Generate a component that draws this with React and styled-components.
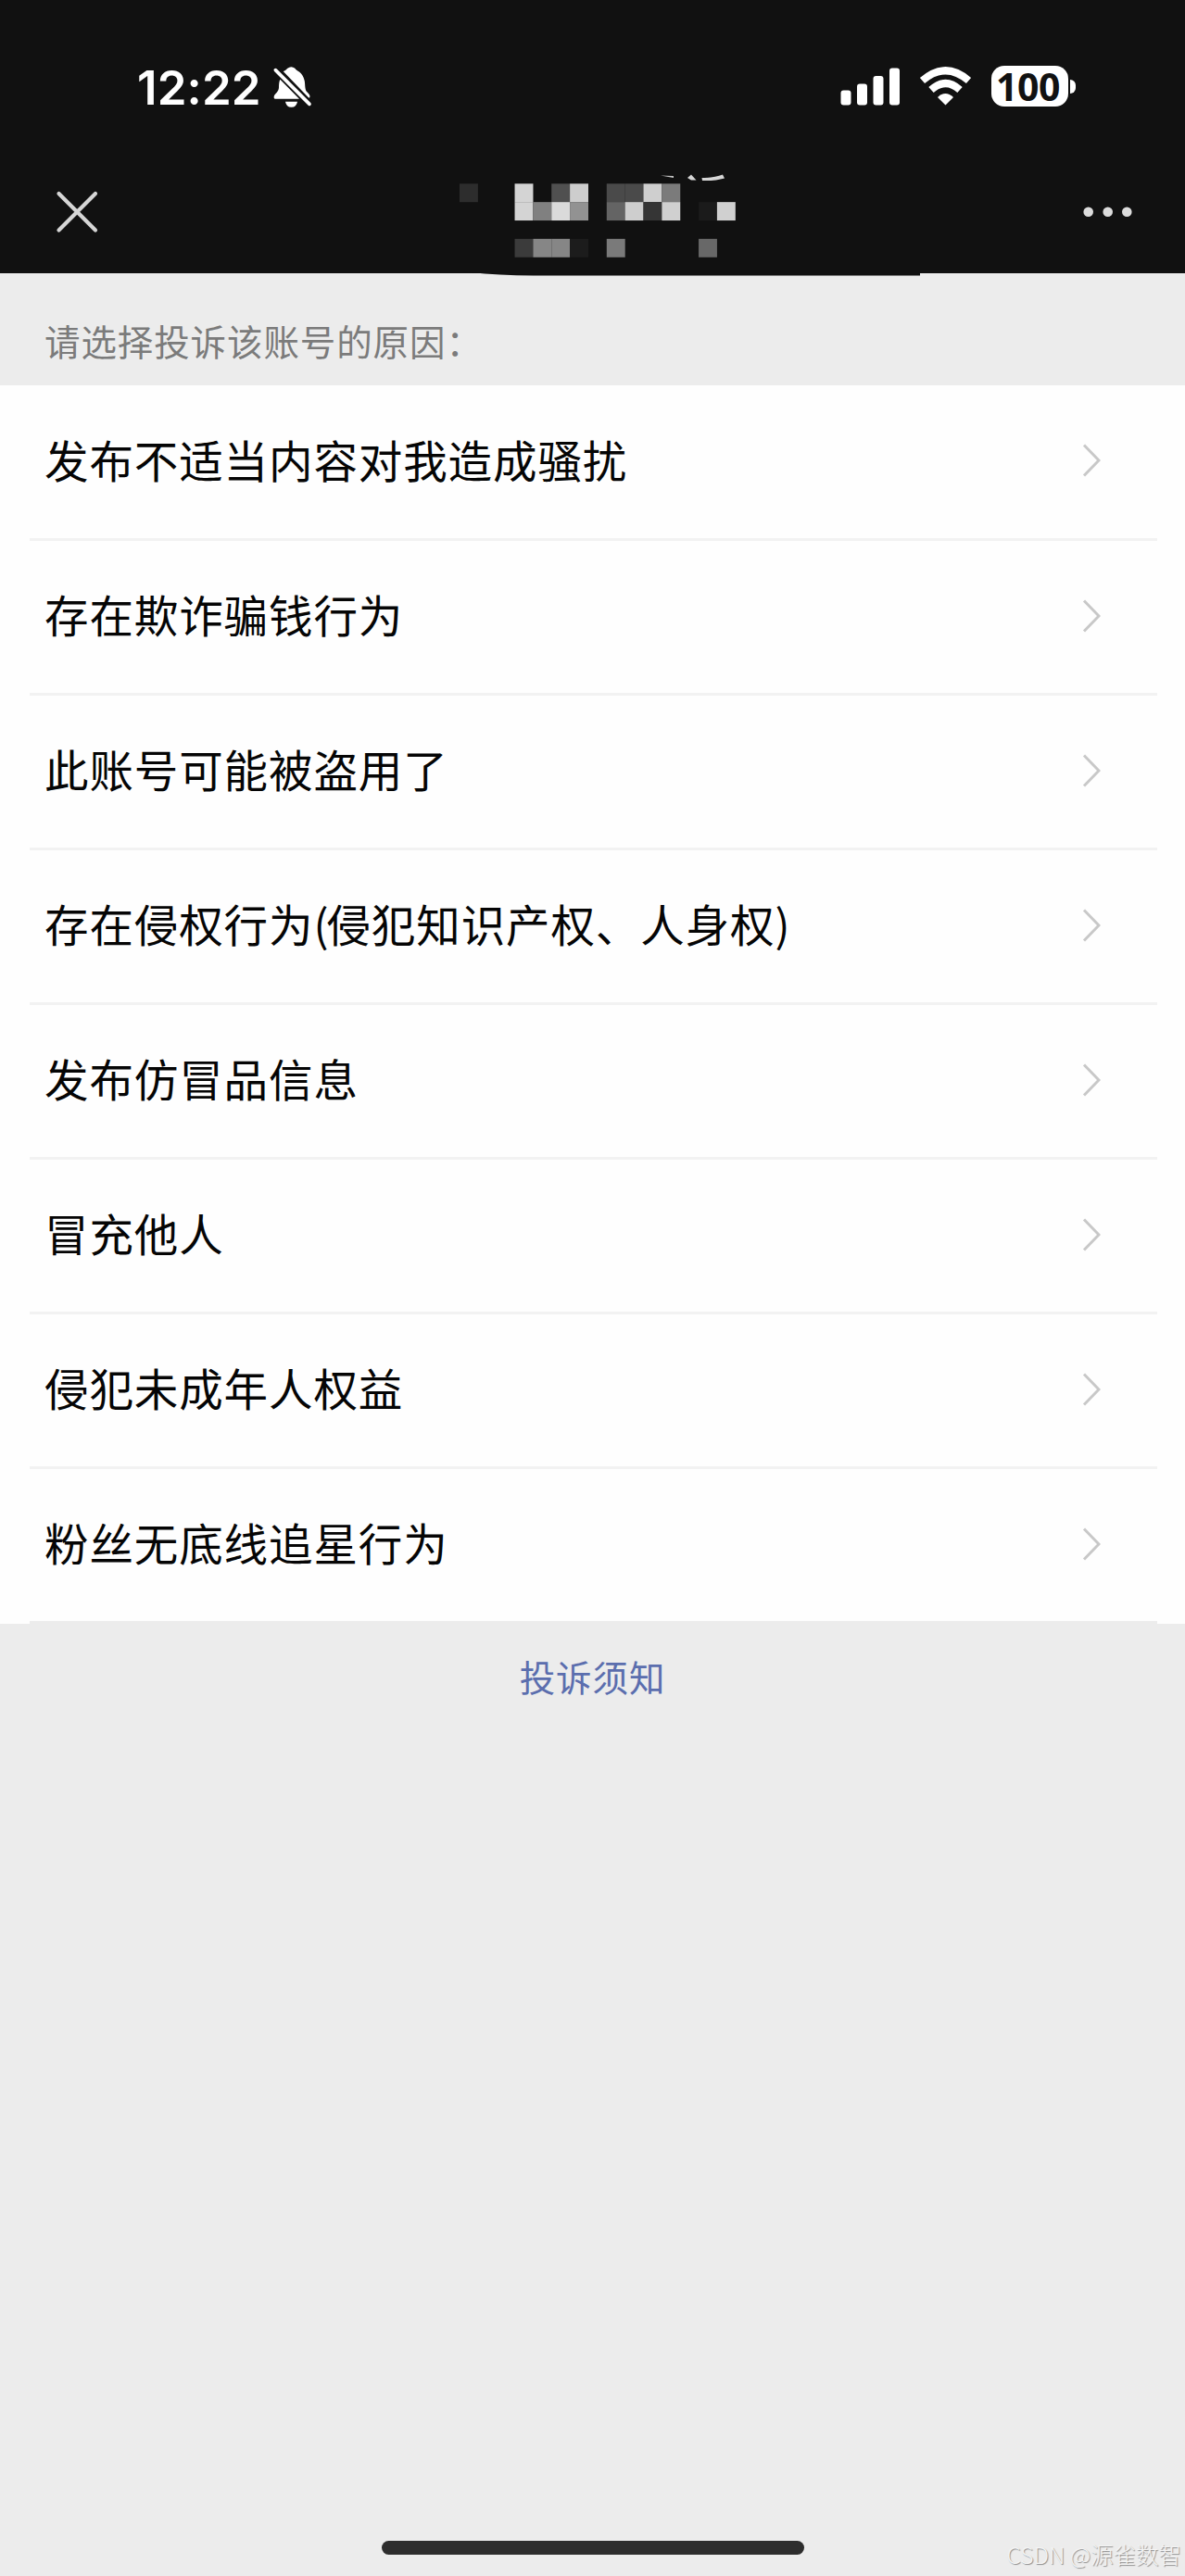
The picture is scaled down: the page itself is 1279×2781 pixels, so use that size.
import styled, { createGlobalStyle } from "styled-components"

const GlobalStyle = createGlobalStyle`
  * {
    box-sizing: border-box;
  }

  body {
    margin: 0;
    background-color: #ececec;
    font-family: "Noto Sans CJK SC", sans-serif;
  }
`

const Page = styled.div`
  display: flex;
  flex-direction: column;
  width: 1279px;
  height: 2781px;
  background-color: #ececec;
  position: relative;
  overflow: hidden;
`

const Header = styled.header`
  height: 295px;
  flex-shrink: 0;
  background-color: #111111;
`

const StatusBar = styled.div`
  display: flex;
  align-items: flex-start;
  justify-content: space-between;
  height: 162px;
  padding: 71px 118px 0 148px;
`

const StatusGroup = styled.div`
  display: flex;
  align-items: flex-start;
`

const Time = styled.span`
  width: 146px;
  color: #ffffff;
  font-family: Inter, sans-serif;
  font-size: 51px;
  font-weight: 600;
  line-height: 47px;
  letter-spacing: 0.1px;
`

const WifiGap = styled.div`
  display: flex;
  margin-left: 21px;
`

const Battery = styled.div`
  width: 83px;
  height: 44px;
  margin-left: 21px;
  padding-right: 4px;
  border-radius: 14px;
  background-color: #ffffff;
  color: #111111;
  font-family: "Open Sans", sans-serif;
  font-size: 41px;
  font-weight: 700;
  line-height: 44px;
  letter-spacing: -0.5px;
  text-align: center;
`

const BatteryTip = styled.div`
  width: 6px;
  height: 15px;
  margin: 15px 0 0 2px;
  border-radius: 0 8px 8px 0;
  background-color: #ffffff;
`

const NavBar = styled.nav`
  display: flex;
  align-items: flex-start;
  padding: 18px 56px 0 60px;
`

const NavButton = styled.button`
  display: flex;
  margin-top: 25px;
  padding: 0;
  border: 0;
  background: none;
`

const HiddenTitle = styled.svg`
  display: block;
  margin: 0 auto 0 392px;
  overflow: visible;
`

const Label = styled.p`
  height: 121px;
  flex-shrink: 0;
  margin: 0;
  padding: 43px 48px 0;
  color: #7b7b7b;
  font-size: 38.5px;
  line-height: 58px;
  letter-spacing: 0.9px;
`

const List = styled.ul`
  flex-shrink: 0;
  margin: 0;
  padding: 0 30px 0 32px;
  background-color: #fefefe;
  list-style: none;
`

const Item = styled.li`
  display: flex;
  align-items: center;
  justify-content: space-between;
  height: 167px;
  padding: 0 61px 3px 16px;
  border-bottom: 3px solid #f2f2f2;
  color: #050505;
  font-size: 47.5px;
  letter-spacing: 0.9px;

  &:first-child {
    height: 168px;
  }

  &:last-child {
    border-bottom-color: #ececec;
  }
`

const Reason = styled.span`
  padding-bottom: 4px;
`

const Paren = styled.span`
  letter-spacing: -2px;
`

const Notice = styled.a`
  margin-top: 27px;
  color: #5b6eae;
  font-size: 38.5px;
  line-height: 58px;
  letter-spacing: 0.9px;
  text-align: center;
`

const HomeIndicator = styled.div`
  width: 456px;
  height: 15px;
  margin: auto 0 23px 412px;
  border-radius: 8px;
  background-color: #2d2d2d;
`

const Watermark = styled.span`
  position: absolute;
  right: 4px;
  bottom: 5px;
  color: #f4f4f4;
  font-size: 24.5px;
  font-weight: 300;
  line-height: 36px;
  text-shadow: 1px 1px 1px #8c8c8c;
  white-space: nowrap;
`

const reasons = [
  '发布不适当内容对我造成骚扰',
  '存在欺诈骗钱行为',
  '此账号可能被盗用了',
  '存在侵权行为(侵犯知识产权、人身权)',
  '发布仿冒品信息',
  '冒充他人',
  '侵犯未成年人权益',
  '粉丝无底线追星行为'
]

// [column, row, color]
const blocks = [
  [0, 0, '#2d2d2d'],
  [3, 0, '#d4d4d4'],
  [5, 0, '#505050'],
  [6, 0, '#cdcdcd'],
  [8, 0, '#4a4a4a'],
  [9, 0, '#4a4a4a'],
  [10, 0, '#cfcfcf'],
  [11, 0, '#7b7b7b'],
  [3, 1, '#d4d4d4'],
  [4, 1, '#808080'],
  [5, 1, '#dadada'],
  [6, 1, '#929292'],
  [8, 1, '#646464'],
  [9, 1, '#cecece'],
  [10, 1, '#353535'],
  [11, 1, '#d0d0d0'],
  [13, 1, '#1b1b1b'],
  [14, 1, '#d0d0d0'],
  [3, 3, '#3b3b3b'],
  [4, 3, '#868686'],
  [5, 3, '#868686'],
  [6, 3, '#1c1c1c'],
  [8, 3, '#7a7a7a'],
  [13, 3, '#686868']
]

function BellOffIcon () {
  return (
    <svg width="43" height="46" viewBox="0 0 129 138" fill="#ffffff">
      <path d="M25 44 L87 107 H8 Q4 107 5 100 C7 90 21 85 21 70 C21 60 22 50 25 44 Z" />
      <path d="M35 18 C41 15 45 13 49 8 Q61 -1 73 8 C77 17 98 18 104 48 C107 62 104 76 112 85 C119 92 124 97 120 104 Q117 104 113 99 Z" />
      <path d="M42 116 H81 Q78 134 61.500 134 Q45 134 42 116 Z" />
      <path d="M10 14 L120 124" stroke="#ffffff" strokeWidth="11" strokeLinecap="round" />
    </svg>
  )
}

function SignalIcon () {
  return (
    <svg width="64" height="44" viewBox="0 0 64 44" fill="#ffffff">
      <rect x="0.500" y="26.500" width="11" height="16" rx="3" />
      <rect x="18" y="19.500" width="11" height="23" rx="3" />
      <rect x="35.500" y="11" width="11" height="31.500" rx="3" />
      <rect x="53" y="2.500" width="11" height="40" rx="3" />
    </svg>
  )
}

function WifiIcon () {
  return (
    <svg width="57" height="44" viewBox="0 0 57 44" fill="none" stroke="#ffffff" strokeWidth="8">
      <path d="M3.500 16 Q28.500 -5.500 53.500 16" />
      <path d="M13 26 Q28.500 12 44 26" />
      <path d="M20 34 Q28.500 26 37 34 L28.500 42.500 Z" fill="#ffffff" stroke="none" />
    </svg>
  )
}

function Chevron () {
  return (
    <svg width="20" height="36" viewBox="0 0 20 36" fill="none" stroke="#c8c8c8" strokeWidth="3">
      <path d="M2 1.500 L18 18 L2 34.500" />
    </svg>
  )
}

function Title () {
  return (
    <HiddenTitle width="490" height="117" viewBox="0 0 490 117">
      <path d="M0 113 Q32 117 76 117.500 H493 V113 Z" fill="#111111" />
      {blocks.map(([column, row, color]) => (
        <rect
          key={`${column}-${row}`}
          x={-4 + column * 19.85}
          y={18.3 + row * 19.85}
          width="19.900"
          height="19.900"
          fill={color}
        />
      ))}
      <path d="M213 9.500 L227 10 V12 Z" fill="#c8c8c8" />
      <path d="M242 12 L246 8.500 L251.500 14.500 H246 Z" fill="#d6d6d6" />
      <path d="M257.500 12 Q271 12 280 8.500 L282 12.500 Q272 15.500 258 15 Z" fill="#d6d6d6" />
    </HiddenTitle>
  )
}

function App () {
  return (
    <Page>
      <GlobalStyle />
      <Header>
        <StatusBar>
          <StatusGroup>
            <Time>12:22</Time>
            <BellOffIcon />
          </StatusGroup>
          <StatusGroup>
            <SignalIcon />
            <WifiGap>
              <WifiIcon />
            </WifiGap>
            <Battery>100</Battery>
            <BatteryTip />
          </StatusGroup>
        </StatusBar>
        <NavBar>
          <NavButton>
            <svg width="48" height="48" viewBox="0 0 48 48" stroke="#d6d6d6" strokeWidth="4.200" strokeLinecap="round">
              <path d="M3.500 4 L43 43.500 M43 4 L3.500 43.500" />
            </svg>
          </NavButton>
          <Title />
          <NavButton>
            <svg width="54" height="48" viewBox="0 0 54 48" fill="#dcdcdc">
              <circle cx="5.700" cy="23.700" r="5.300" />
              <circle cx="26.700" cy="23.700" r="5.300" />
              <circle cx="47.300" cy="23.700" r="5.300" />
            </svg>
          </NavButton>
        </NavBar>
      </Header>
      <Label>请选择投诉该账号的原因：</Label>
      <List>
        {reasons.map(reason => (
          <Item key={reason}>
            <Reason>
              {reason.split(/([()])/).map((part, index) => (
                index % 2 ? <Paren key={index}>{part}</Paren> : part
              ))}
            </Reason>
            <Chevron />
          </Item>
        ))}
      </List>
      <Notice>投诉须知</Notice>
      <HomeIndicator />
      <Watermark>CSDN @源雀数智</Watermark>
    </Page>
  )
}

export default App
